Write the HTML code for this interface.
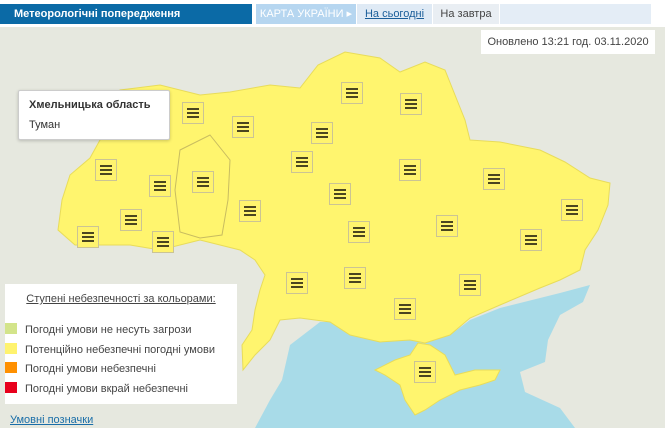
<!DOCTYPE html>
<html><head><meta charset="utf-8"><style>
body{margin:0;width:665px;height:428px;overflow:hidden;background:#fff;font-family:"Liberation Sans",sans-serif;position:relative}
.a{position:absolute}
.ic{position:absolute;width:22px;height:22px;border:1px solid #cbc494;background:#fff36e;box-sizing:border-box}
.ic i{position:absolute;left:4px;width:12px;height:2px;background:#4a4520}
</style></head><body>
<div class="a" style="left:0;top:27px;width:665px;height:401px;overflow:hidden;background:#e6e8df">
<svg width="665" height="401" viewBox="0 27 665 401" style="position:absolute;left:0;top:0">
<path d="M255,428 L270,400 L282,380 L290,345 L320,322 L345,322 L360,338 L410,340 L450,335 L470,320 L500,308 L560,293 L590,285 L583,302 L560,315 L548,340 L545,362 L520,372 L525,392 L560,408 L575,428Z" fill="#a8dbe8"/>
<path d="M58,230 L62,200 L70,175 L90,158 L100,140 L105,110 L120,90 L160,85 L200,95 L230,92 L270,85 L300,88 L318,65 L345,52 L380,58 L400,72 L425,62 L445,70 L455,95 L465,120 L470,140 L500,142 L540,150 L565,162 L590,178 L610,183 L608,205 L598,230 L585,250 L580,270 L560,280 L540,288 L500,305 L470,318 L450,335 L425,343 L410,340 L380,342 L350,335 L330,322 L300,318 L280,320 L270,340 L255,355 L243,370 L242,345 L252,330 L255,310 L260,290 L265,275 L255,260 L240,250 L200,240 L160,250 L130,245 L100,245 L75,245Z" fill="#fff56e" stroke="#e8dc5a" stroke-width="1"/>
<path d="M375,370 L395,360 L410,355 L418,343 L430,345 L445,355 L455,375 L475,370 L500,370 L495,380 L480,385 L460,390 L440,400 L425,410 L415,415 L405,400 L400,385 L385,375Z" fill="#fff56e" stroke="#e8dc5a"/>
<path d="M210,135 L230,160 L228,200 L222,235 L200,238 L180,232 L175,190 L180,150Z" fill="none" stroke="#c8bc60" stroke-width="1"/>
</svg>
</div>
<div class="a" style="left:0;top:4px;width:252px;height:20px;background:#0b6aa6;color:#fff;font-size:11px;font-weight:bold;line-height:20px;padding-left:14px;box-sizing:border-box">Метеорологічні попередження</div>
<div class="a" style="left:256px;top:4px;width:100px;height:20px;background:#b6d6f0;color:#fff;font-size:11px;line-height:20px;text-align:center">КАРТА УКРАЇНИ ▸</div>
<div class="a" style="left:357px;top:4px;width:75px;height:20px;background:#dfeaf5;color:#1a5e9a;font-size:11px;line-height:20px;text-align:center;text-decoration:underline">На сьогодні</div>
<div class="a" style="left:433px;top:4px;width:66px;height:20px;background:#e9eef3;color:#444;font-size:11px;line-height:20px;text-align:center">На завтра</div>
<div class="a" style="left:500px;top:4px;width:151px;height:20px;background:#e4edf6"></div>
<div class="a" style="left:481px;top:30px;width:174px;height:24px;background:#fff;color:#444;font-size:11px;line-height:24px;text-align:center">Оновлено 13:21 год. 03.11.2020</div>
<div id="icons"></div>
<div class="a" style="left:18px;top:90px;width:152px;height:50px;background:#fff;border:1px solid #ccc;border-radius:2px;box-shadow:0 1px 3px rgba(0,0,0,.2);box-sizing:border-box;padding:8px 10px;font-size:11px;color:#333">
<div style="font-weight:bold">Хмельницька область</div><div style="margin-top:8px">Туман</div></div>
<div class="a" style="left:5px;top:284px;width:232px;height:120px;background:#fff;font-size:11px;color:#444">
<div style="text-align:center;margin-top:9px;text-decoration:underline">Ступені небезпечності за кольорами:</div>
<div style="position:absolute;left:0;top:37px;line-height:19.5px">
<div><span style="display:inline-block;width:12px;height:11px;background:#d3e48a;vertical-align:-1px;margin-right:8px"></span>Погодні умови не несуть загрози</div>
<div><span style="display:inline-block;width:12px;height:11px;background:#fff36e;vertical-align:-1px;margin-right:8px"></span>Потенційно небезпечні погодні умови</div>
<div><span style="display:inline-block;width:12px;height:11px;background:#ff9000;vertical-align:-1px;margin-right:8px"></span>Погодні умови небезпечні</div>
<div><span style="display:inline-block;width:12px;height:11px;background:#e8001c;vertical-align:-1px;margin-right:8px"></span>Погодні умови вкрай небезпечні</div>
</div></div>
<div class="a" style="left:10px;top:414px;font-size:11px;color:#1a6ea8;text-decoration:underline">Умовні позначки</div>
<script>
var p=[[193,113],[106,170],[160,186],[203,182],[131,220],[88,237],[163,242],[250,211],[243,127],[352,93],[411,104],[322,133],[302,162],[340,194],[410,170],[494,179],[572,210],[359,232],[447,226],[531,240],[297,283],[355,278],[470,285],[405,309],[425,372]];
var h='';p.forEach(function(c){h+='<div class="ic" style="left:'+(c[0]-11)+'px;top:'+(c[1]-11)+'px"><i style="top:5px"></i><i style="top:9px"></i><i style="top:13px"></i></div>'});
document.getElementById('icons').innerHTML=h;
</script>
</body></html>
